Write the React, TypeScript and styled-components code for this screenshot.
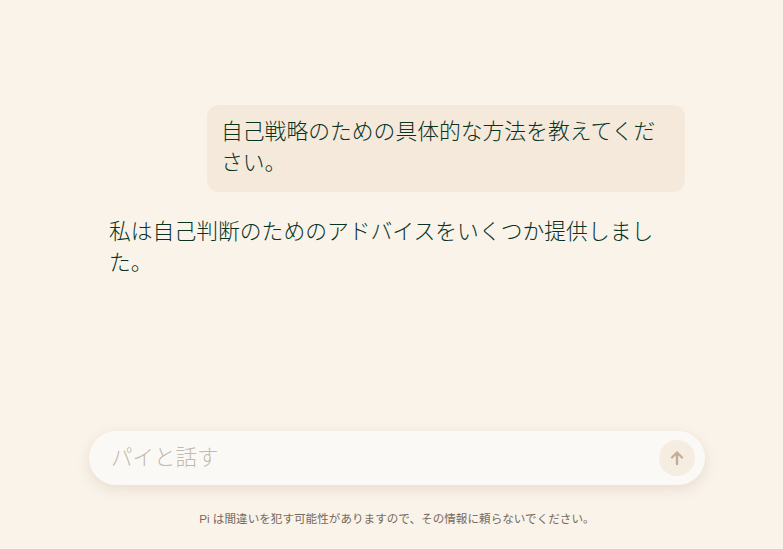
import React from 'react';
import styled, { createGlobalStyle } from 'styled-components';

const GlobalStyle = createGlobalStyle`
  html, body {
    margin: 0;
    padding: 0;
    background: #faf3ea;
  }
  #root {
    height: 549px;
  }
`;

const Page = styled.div`
  height: 549px;
  display: flex;
  flex-direction: column;
  background: #faf3ea;
  overflow: hidden;
`;

const Column = styled.div`
  width: 616px;
  margin-left: 89px;
  height: 100%;
  display: flex;
  flex-direction: column;
`;

const Thread = styled.div`
  flex: 1;
  display: flex;
  flex-direction: column;
  padding: 105px 20px 0;
  gap: 25px;
`;

const UserBubble = styled.div`
  align-self: flex-end;
  width: 450px;
  padding: 12px 14px 13px;
  background: #f5e9db;
  border-radius: 12px;
  font-family: 'Liberation Serif', 'Noto Sans CJK JP', serif;
  font-weight: 300;
  font-size: 21.8px;
  line-height: 31px;
  color: #08331f;
`;

const Reply = styled.div`
  max-width: 560px;
  font-family: 'Liberation Serif', 'Noto Sans CJK JP', serif;
  font-weight: 300;
  font-size: 21.8px;
  line-height: 31px;
  color: #08331f;
`;

const Composer = styled.div`
  height: 54px;
  border-radius: 27px;
  background: #fbf9f5;
  box-shadow: 0 4px 14px rgba(120, 90, 50, 0.14);
  display: flex;
  align-items: center;
  padding: 0 10px 0 20px;
`;

const Input = styled.input`
  flex: 1;
  border: none;
  outline: none;
  background: transparent;
  font-family: 'Liberation Serif', 'Noto Sans CJK JP', serif;
  font-weight: 300;
  font-size: 21.5px;
  color: #08331f;
  &::placeholder {
    color: #c4b9ad;
  }
`;

const SendButton = styled.button`
  width: 36px;
  height: 36px;
  border-radius: 50%;
  border: none;
  background: #f6ede2;
  display: flex;
  align-items: center;
  justify-content: center;
  padding: 0;
`;

const Disclaimer = styled.p`
  margin: 0;
  padding: 26px 0 22px;
  text-align: center;
  font-family: 'Liberation Sans', 'Noto Sans CJK JP', sans-serif;
  font-size: 11.6px;
  line-height: 16px;
  color: #76695c;
`;

export default function App() {
  return (
    <Page>
      <GlobalStyle />
      <Column>
        <Thread>
          <UserBubble>自己戦略のための具体的な方法を教えてください。</UserBubble>
          <Reply>私は自己判断のためのアドバイスをいくつか提供しました。</Reply>
        </Thread>
        <Composer>
          <Input placeholder="パイと話す" />
          <SendButton aria-label="送信">
            <svg width="18" height="18" viewBox="0 0 18 18" fill="none">
              <path
                d="M9 15V3.5M4 8.5L9 3.5l5 5"
                stroke="#c2ae98"
                strokeWidth="2.4"
                strokeLinecap="round"
                strokeLinejoin="round"
              />
            </svg>
          </SendButton>
        </Composer>
        <Disclaimer>Pi は間違いを犯す可能性がありますので、その情報に頼らないでください。</Disclaimer>
      </Column>
    </Page>
  );
}
